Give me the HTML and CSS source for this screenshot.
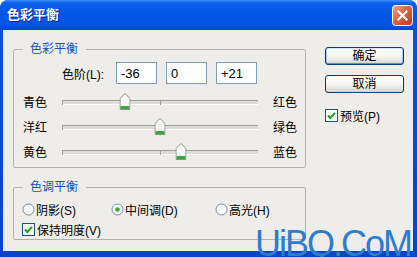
FILE: index.html
```html
<!DOCTYPE html>
<html lang="zh-CN">
<head>
  <meta charset="UTF-8">
  <title>色彩平衡</title>
  <link rel="stylesheet" href="styles.css">
</head>
<body>
  <div class="window">
    <div class="titlebar">
      <span class="title">色彩平衡</span>
      <svg class="close" width="21" height="21" viewBox="0 0 21 21">
        <defs>
          <linearGradient id="closeGrad" x1="0" y1="0" x2="1" y2="1">
            <stop offset="0" stop-color="#f2a68e"/>
            <stop offset="0.45" stop-color="#e0633f"/>
            <stop offset="1" stop-color="#c03c18"/>
          </linearGradient>
        </defs>
        <rect x="0.5" y="0.5" width="20" height="20" rx="3" fill="url(#closeGrad)" stroke="#fff"/>
        <path d="M6.5 6.5L14.5 14.5M14.5 6.5L6.5 14.5" stroke="#fff" stroke-width="2.2" stroke-linecap="square"/>
      </svg>
    </div>

    <div class="body">
      <div class="main">
        <fieldset class="group group-color">
          <legend>色彩平衡</legend>
          <div class="levels">
            <span class="levels-label">色阶(L):</span>
            <input class="num" type="text" value="-36">
            <input class="num" type="text" value="0">
            <input class="num" type="text" value="+21">
          </div>
          <div class="sliders">
            <div class="slider-row">
              <span>青色</span>
              <div class="track">
                <span class="tick" style="left: 0%"></span>
                <span class="tick" style="left: 50%"></span>
                <svg class="thumb" style="left: 32%" width="11" height="17" viewBox="0 0 11 17">
                  <path d="M0.5 5.5L5.5 0.5L10.5 5.5V16.5H0.5Z" fill="#f7f7f4" stroke="#8c8c88"/>
                  <rect x="1" y="13" width="9" height="3" fill="#3aa83a"/>
                </svg>
              </div>
              <span class="right">红色</span>
            </div>
            <div class="slider-row">
              <span>洋红</span>
              <div class="track">
                <span class="tick" style="left: 0%"></span>
                <span class="tick" style="left: 50%"></span>
                <svg class="thumb" style="left: 50%" width="11" height="17" viewBox="0 0 11 17">
                  <path d="M0.5 5.5L5.5 0.5L10.5 5.5V16.5H0.5Z" fill="#f7f7f4" stroke="#8c8c88"/>
                  <rect x="1" y="13" width="9" height="3" fill="#3aa83a"/>
                </svg>
              </div>
              <span class="right">绿色</span>
            </div>
            <div class="slider-row">
              <span>黄色</span>
              <div class="track">
                <span class="tick" style="left: 0%"></span>
                <span class="tick" style="left: 50%"></span>
                <svg class="thumb" style="left: 60.5%" width="11" height="17" viewBox="0 0 11 17">
                  <path d="M0.5 5.5L5.5 0.5L10.5 5.5V16.5H0.5Z" fill="#f7f7f4" stroke="#8c8c88"/>
                  <rect x="1" y="13" width="9" height="3" fill="#3aa83a"/>
                </svg>
              </div>
              <span class="right">蓝色</span>
            </div>
          </div>
        </fieldset>

        <fieldset class="group group-tone">
          <legend>色调平衡</legend>
          <div class="tones">
            <label class="opt">
              <svg width="13" height="13" viewBox="0 0 13 13"><circle cx="6.5" cy="6.5" r="5.5" fill="#fbfbf9" stroke="#7088a6"/></svg>
              阴影(S)
            </label>
            <label class="opt">
              <svg width="13" height="13" viewBox="0 0 13 13"><circle cx="6.5" cy="6.5" r="5.5" fill="#fbfbf9" stroke="#7088a6"/><circle cx="6.5" cy="6.5" r="2.3" fill="#3aa83a"/></svg>
              中间调(D)
            </label>
            <label class="opt">
              <svg width="13" height="13" viewBox="0 0 13 13"><circle cx="6.5" cy="6.5" r="5.5" fill="#fbfbf9" stroke="#7088a6"/></svg>
              高光(H)
            </label>
          </div>
          <label class="opt check">
            <svg width="13" height="13" viewBox="0 0 13 13"><rect x="0.5" y="0.5" width="12" height="12" fill="#f8f8f5" stroke="#1c5180"/><path d="M3 6.5L5.3 9L10 3.8" fill="none" stroke="#21a121" stroke-width="2"/></svg>
            保持明度(V)
          </label>
        </fieldset>
      </div>

      <div class="side">
        <button class="btn btn-default">确定</button>
        <button class="btn">取消</button>
        <label class="opt preview">
          <svg width="13" height="13" viewBox="0 0 13 13"><rect x="0.5" y="0.5" width="12" height="12" fill="#f8f8f5" stroke="#1c5180"/><path d="M3 6.5L5.3 9L10 3.8" fill="none" stroke="#21a121" stroke-width="2"/></svg>
          预览(P)
        </label>
      </div>
    </div>

    <div class="watermark">UiBQ.CoM</div>
  </div>
</body>
</html>
```

FILE: styles.css
```css
* { box-sizing: border-box; }
body { margin: 0; background: #fff; font-family: "Liberation Sans", "Noto Sans CJK SC", sans-serif; font-size: 12px; color: #000; }

.window { position: relative; width: 417px; height: 257px; overflow: hidden; display: flex; flex-direction: column; background: linear-gradient(#0a52dc, #0845cc); border-radius: 8px 8px 0 0; }
.titlebar { height: 30px; flex: none; display: flex; align-items: center; justify-content: space-between; padding: 0 4px 0 7px; border-radius: 8px 8px 0 0; background: linear-gradient(#3d8ff7 0, #0a60ea 3px, #0257e6 45%, #0454e2 85%, #0248d2 100%); }
.title { color: #fff; font-size: 13px; font-weight: bold; line-height: 16px; text-shadow: 1px 1px #0b2a8c; }
.close { display: block; }

.body { flex: 1; display: flex; gap: 19px; margin: 0 4px 6px 3px; padding: 12px 0 0 10px; background: #eeede9; }
.main { width: 293px; }

.group { margin: 0; min-width: 0; border: 1px solid #b2b1aa; border-radius: 2px; padding: 6px 0 3px 9px; }
.group legend { padding: 0 8px 0 7px; color: #1a4fc4; line-height: 14px; }
.group-tone { margin-top: 12px; padding: 5px 0 0 9px; }

.levels { display: flex; align-items: center; height: 22px; padding-left: 39px; }
.levels-label { width: 54px; }
.num { width: 41px; height: 22px; margin: 0 9px 0 0; padding: 0 4px; border: 1px solid #7f9db9; background: #fff; font: 13px "Liberation Sans", sans-serif; color: #000; }
.num:last-child { margin-right: 0; }

.sliders { padding-top: 5px; }
.slider-row { display: grid; grid-template-columns: 39px 196px auto; align-items: center; height: 25px; }
.slider-row .right { padding-left: 15px; }
.track { position: relative; height: 17px; }
.track::before { content: ""; position: absolute; left: 0; right: 0; top: 7px; height: 3px; background: #dddcd6; border-top: 1px solid #9f9e99; border-bottom: 1px solid #fff; }
.tick { position: absolute; top: 8px; width: 1px; height: 4px; background: #9f9e99; }
.thumb { position: absolute; top: 0; transform: translateX(-50%); }

.tones { display: grid; grid-template-columns: 89px 104px auto; align-items: center; height: 20px; margin-left: -1px; }
.opt { display: flex; align-items: center; gap: 1px; height: 20px; white-space: nowrap; }
.opt svg { flex: none; display: block; }
.check { margin-left: -1px; gap: 2px; }

.side { width: 79px; display: flex; flex-direction: column; padding-top: 5px; }
.btn { height: 18px; padding: 0; border: 1px solid #003c74; border-radius: 3px; background: linear-gradient(#ffffff, #f3f3ee 55%, #d8d3c8); font: inherit; line-height: 16px; color: #000; }
.btn + .btn { margin-top: 10px; }
.btn-default { box-shadow: inset 0 1px 0 #cee7ff, inset 0 -1px 0 #6982ee, inset 1px 0 0 #a9c4f2, inset -1px 0 0 #a9c4f2; }
.preview { margin-top: 12px; gap: 2px; }

.watermark { position: absolute; left: 255px; top: 226px; font: 36px/36px "Liberation Sans", sans-serif; letter-spacing: -2px; color: #2f7ccb; white-space: nowrap; }
```
